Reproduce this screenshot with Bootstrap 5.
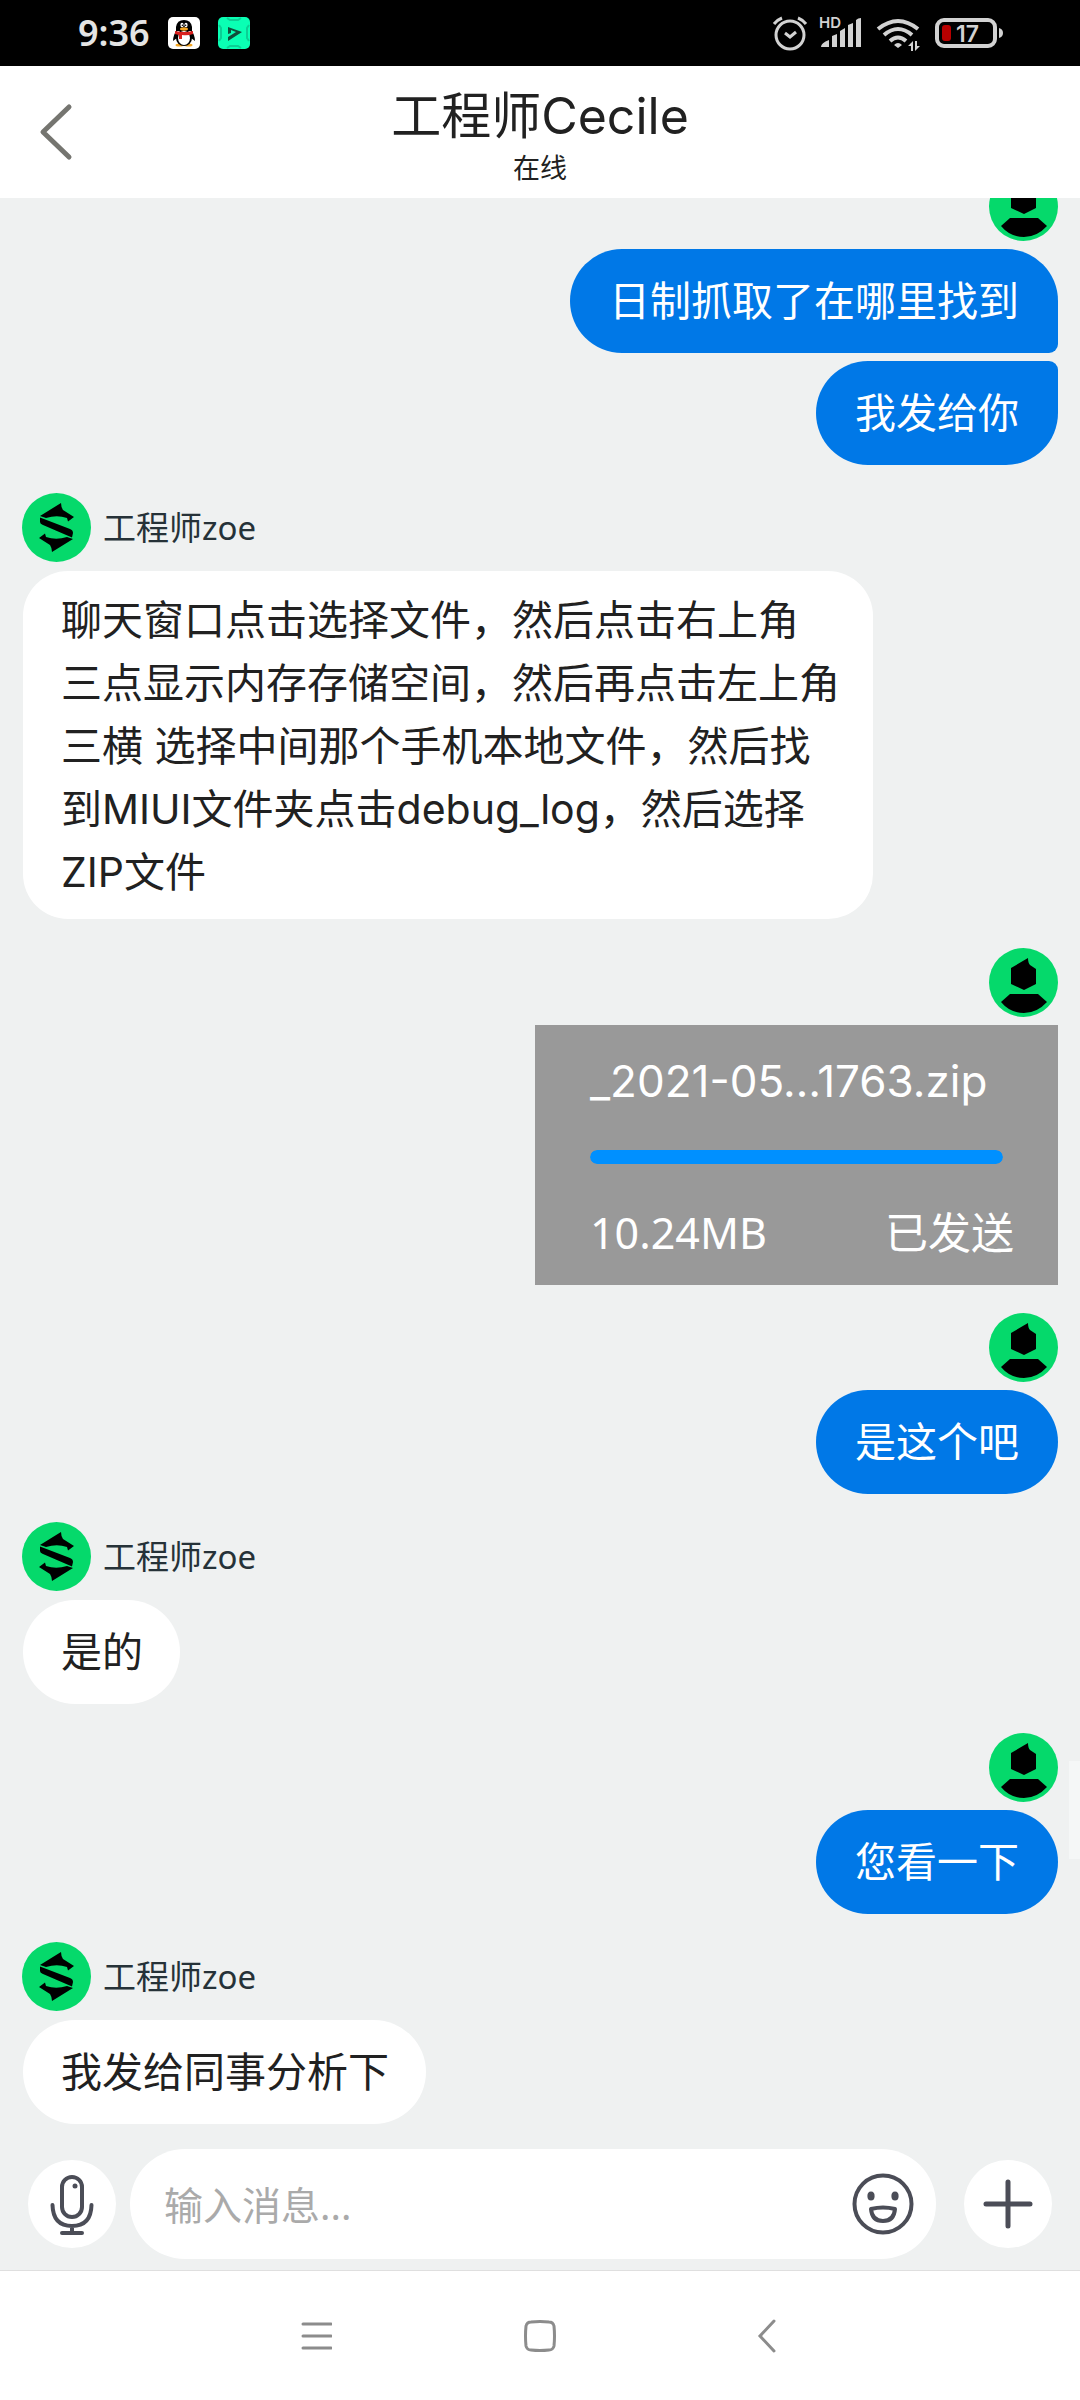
<!DOCTYPE html>
<html lang="zh-CN">
<head>
<meta charset="utf-8">
<meta name="viewport" content="width=device-width, initial-scale=1">
<title>工程师Cecile</title>
<link rel="stylesheet" href="https://cdn.jsdelivr.net/npm/bootstrap@5.3.0/dist/css/bootstrap.min.css">
<style>
  body { font-family: "Noto Sans", "Noto Sans CJK SC", sans-serif; background: #eff1f1; color: #212121; }
  svg { display: block; flex: none; }
  .status-bar { height: 66px; padding: 0 76px 0 78px; background: #000; color: #e4e4e4; }
  .clock { font-size: 36px; line-height: 40px; font-weight: 600; }
  .status-apps { gap: 18px; }
  .chat-header { height: 132px; background: #fff; }
  .side-slot { width: 112px; }
  .back-btn { padding: 0 0 0 39px; }
  .chat-title { font-family: "Inter", "Noto Sans CJK SC", sans-serif; font-size: 50px; line-height: 60px; font-weight: 400; padding-top: 20px; }
  .chat-state { font-size: 27px; line-height: 36px; padding-top: 4px; }
  .thread { padding: 0 22px 25px; overflow: hidden; position: relative; }
  .group-mine { display: flex; flex-direction: column; align-items: flex-end; gap: 8px; margin-bottom: 28px; }
  .group-peer { display: flex; flex-direction: column; align-items: flex-start; gap: 9px; margin-bottom: 29px; }
  .group-cut { margin-top: -26px; }
  .group-last { margin-bottom: 0; }
  .peer-name { font-size: 33px; line-height: 40px; color: #263238; gap: 12px; }
  .bubble { font-family: "Inter", "Noto Sans CJK SC", sans-serif; font-size: 41px; line-height: 63px; border-radius: 52px; padding: 21px 39px 20px; }
  .bubble-mine { background: #0078e7; color: #fff; }
  .bubble-peer { background: #fff; margin-left: 1px; padding-left: 38px; padding-right: 37px; }
  .bubble-long { max-width: 851px; border-radius: 45px; padding: 18px 33px 15px 38px; }
  .join-top { border-bottom-right-radius: 9px; }
  .join-bottom { border-top-right-radius: 9px; }
  .file-card { width: 523px; height: 260px; background: #999; color: #fff; font-size: 43px; line-height: 60px; padding: 26px 44px 22px 55px; }
  .file-name { font-family: "Inter", sans-serif; font-size: 44px; }
  .file-card .progress { height: 14px; border-radius: 7px; margin-right: 11px; background: #999; }
  .file-card .progress-bar { background: #0090ff; border-radius: 7px; }
  .scroll-hint { position: absolute; right: 0; top: 1563px; width: 11px; height: 98px; background: #f5f7f7; }
  .composer { padding: 0 28px 11px; gap: 14px; border-bottom: 1px solid #dfdfdf; }
  .round-btn { width: 88px; height: 88px; border-radius: 50%; background: #fff; }
  .plus-btn { margin-left: 14px; }
  .message-box { height: 110px; border-radius: 55px; background: #fff; padding: 0 22px 0 34px; }
  .message-box input { font-size: 39px; line-height: 56px; color: #212121; padding: 2px 0 0; }
  .message-box input::placeholder { color: #aaa; opacity: 1; }
  .system-nav { height: 129px; background: #fff; gap: 192px; }
</style>
</head>
<body>
<div class="d-flex flex-column min-vh-100">
  <div class="status-bar d-flex justify-content-between align-items-center">
    <div class="status-apps d-flex align-items-center">
      <span class="clock">9:36</span>
      <svg width="32" height="32" viewBox="0 0 32 32" role="img" aria-label="QQ">
        <rect width="32" height="32" rx="5" fill="#fff"/>
        <path d="M9 13Q5 18 5 24L9 21ZM23 13Q27 18 27 24L23 21Z" fill="#000"/>
        <ellipse cx="11.500" cy="28" rx="4" ry="1.600" fill="#f5a623"/><ellipse cx="20.500" cy="28" rx="4" ry="1.600" fill="#f5a623"/>
        <ellipse cx="16" cy="21" rx="8" ry="8" fill="#000"/><ellipse cx="16" cy="21" rx="6" ry="7" fill="#fff"/>
        <path d="M8 14V10Q9 3 16 3Q23 3 24 10V14Z" fill="#000"/>
        <ellipse cx="14" cy="8" rx="1.600" ry="2.200" fill="#fff"/><ellipse cx="18" cy="8" rx="1.600" ry="2.200" fill="#fff"/>
        <circle cx="14.400" cy="8.300" r=".8"/><circle cx="17.600" cy="8.300" r=".8"/>
        <ellipse cx="16" cy="12" rx="4" ry="1.700" fill="#f5a623"/>
        <path d="M7 14Q16 16 25 14V17Q20 19 14 18V22H11V18L7 17Z" fill="#d9201e"/>
      </svg>
      <svg width="32" height="32" viewBox="0 0 32 32" role="img" aria-label="App">
        <rect width="32" height="32" rx="5" fill="#0affb4"/>
        <path d="M9 1L12 3H20L23 1M9 31L12 29H20L23 31M1 8L3 11V21L1 24M31 8L29 11V21L31 24" fill="none" stroke="#0bcf95" stroke-width="2"/>
        <path d="M10 10L24 15L10 24V20L18 15L13 13V16L10 17Z" fill="#114d3b"/>
      </svg>
    </div>
    <svg width="234" height="40" viewBox="770 13 234 40" fill="none" stroke="#d2d2d2" role="img" aria-label="闹钟 信号 无线网络 电量">
      <circle cx="790" cy="35" r="14" stroke-width="3"/>
      <path d="M785 33L790 37L796 32M774 24Q777 20 782 18M798 18Q803 20 806 24" stroke-width="3"/>
      <g fill="#d2d2d2" stroke="none">
        <path d="M821 47Q821 43 829 40V47ZM832 36L837 34V47H832ZM840 31L845 28V47H840ZM848 25L853 23V47H848ZM856 20Q858 18 861 18V47H856Z"/>
        <text x="819" y="28" font-size="15" font-weight="600" font-family="Inter, sans-serif">HD</text>
        <text x="956" y="42" font-size="23" font-weight="600" font-family="Inter, sans-serif">17</text>
        <path d="M894 45Q898 41 902 45L898 48ZM908 46L913 41V51H911V46ZM915 41H917V46H920L915 51ZM999 28Q1003 29 1003 33Q1003 37 999 38Z"/>
      </g>
      <path d="M878 29Q898 13 918 29M884 35Q898 23 912 35M890 41Q898 34 906 41" stroke-width="4"/>
      <rect x="937" y="20" width="58" height="26" rx="7" stroke-width="4"/>
      <rect x="942" y="25" width="9" height="16" rx="3" fill="#b80000" stroke="none"/>
    </svg>
  </div>

  <header class="chat-header d-flex">
    <div class="side-slot d-flex align-items-center">
      <button type="button" class="back-btn btn border-0" aria-label="返回">
        <svg width="34" height="60" viewBox="0 0 34 60" fill="none" stroke="#757570" stroke-width="5" stroke-linecap="round" stroke-linejoin="round"><path d="M30 5L4 30L30 55"/></svg>
      </button>
    </div>
    <div class="flex-grow-1 text-center">
      <h1 class="chat-title m-0">工程师Cecile</h1>
      <div class="chat-state">在线</div>
    </div>
    <div class="side-slot"></div>
  </header>

  <svg width="0" height="0" class="position-absolute" aria-hidden="true">
    <symbol id="avatar-me" viewBox="0 0 69 69">
      <circle cx="34.500" cy="34.500" r="34.500" fill="#05d96b"/>
      <path d="M39 10L22 20V36L35 42L47 36V21L41 17Q39 15 39 10ZM21 46H49L58 54Q48 65 35 65Q21 65 12 54Z"/>
    </symbol>
    <symbol id="avatar-peer" viewBox="0 0 69 69">
      <circle cx="34.500" cy="34.500" r="34.500" fill="#05d96b"/>
      <g id="s-hook"><path d="M18 23L39 10Q39 14 41 17L52 24L46 28.500L45 25Q35 21.500 24 25Z"/></g>
      <use href="#s-hook" transform="rotate(180 34.500 34.500)"/>
      <path d="M18 24.500V29Q18 31 21 32L50 44.500L51 40Q51 37 48 36Z"/>
    </symbol>
  </svg>

  <main class="thread flex-grow-1">
    <section class="group-mine group-cut">
      <svg width="69" height="69" role="img" aria-label="我"><use href="#avatar-me"/></svg>
      <div class="bubble bubble-mine join-top">日制抓取了在哪里找到</div>
      <div class="bubble bubble-mine join-bottom">我发给你</div>
    </section>

    <section class="group-peer">
      <div class="peer-name d-flex align-items-center">
        <svg width="69" height="69" aria-hidden="true"><use href="#avatar-peer"/></svg><span>工程师zoe</span>
      </div>
      <div class="bubble bubble-peer bubble-long">聊天窗口点击选择文件，然后点击右上角<br>三点显示内存存储空间，然后再点击左上角<br>三横 选择中间那个手机本地文件，然后找<br>到MIUI文件夹点击debug_log，然后选择<br>ZIP文件</div>
    </section>

    <section class="group-mine">
      <svg width="69" height="69" role="img" aria-label="我"><use href="#avatar-me"/></svg>
      <div class="file-card d-flex flex-column justify-content-between">
        <div class="file-name text-nowrap">_2021-05…1763.zip</div>
        <div class="progress" role="progressbar" aria-label="上传进度" aria-valuenow="100" aria-valuemin="0" aria-valuemax="100"><div class="progress-bar w-100"></div></div>
        <div class="d-flex justify-content-between"><span>10.24MB</span><span>已发送</span></div>
      </div>
    </section>

    <section class="group-mine">
      <svg width="69" height="69" role="img" aria-label="我"><use href="#avatar-me"/></svg>
      <div class="bubble bubble-mine">是这个吧</div>
    </section>

    <section class="group-peer">
      <div class="peer-name d-flex align-items-center">
        <svg width="69" height="69" aria-hidden="true"><use href="#avatar-peer"/></svg><span>工程师zoe</span>
      </div>
      <div class="bubble bubble-peer">是的</div>
    </section>

    <section class="group-mine">
      <svg width="69" height="69" role="img" aria-label="我"><use href="#avatar-me"/></svg>
      <div class="bubble bubble-mine">您看一下</div>
    </section>

    <section class="group-peer group-last">
      <div class="peer-name d-flex align-items-center">
        <svg width="69" height="69" aria-hidden="true"><use href="#avatar-peer"/></svg><span>工程师zoe</span>
      </div>
      <div class="bubble bubble-peer">我发给同事分析下</div>
    </section>
    <div class="scroll-hint"></div>
  </main>

  <form class="composer d-flex align-items-center">
    <button type="button" class="round-btn btn p-0 border-0 d-flex align-items-center justify-content-center flex-shrink-0" aria-label="语音">
      <svg width="88" height="88" viewBox="0 0 88 88" fill="none" stroke="#4b4d57" stroke-width="4" stroke-linecap="round"><rect x="34" y="17" width="20" height="40" rx="10"/><path d="M24.500 45Q25 66 44 66Q63 66 63.500 45M44 66V73M34 73H54"/><circle cx="47" cy="26" r="2.500" fill="#4b4d57" stroke="none"/></svg>
    </button>
    <div class="message-box d-flex align-items-center flex-grow-1">
      <input type="text" class="form-control border-0 bg-transparent shadow-none" placeholder="输入消息..." aria-label="输入消息">
      <button type="button" class="btn p-0 border-0" aria-label="表情">
        <svg width="62" height="62" viewBox="0 0 62 62" fill="none" stroke="#4b4d57" stroke-width="4"><circle cx="31" cy="31" r="28.500"/><path d="M19 36Q31 33 43 36Q42 48 31 48Q20 48 19 36Z" stroke-linejoin="round"/><g fill="#4b4d57" stroke="none"><ellipse cx="19" cy="23" rx="3.600" ry="4.500"/><ellipse cx="43" cy="23" rx="3.600" ry="4.500"/></g></svg>
      </button>
    </div>
    <button type="button" class="round-btn plus-btn btn p-0 border-0 d-flex align-items-center justify-content-center flex-shrink-0" aria-label="更多">
      <svg width="88" height="88" viewBox="0 0 88 88" stroke="#4b4d57" stroke-width="5" stroke-linecap="round"><path d="M22 44H66M44 22V66"/></svg>
    </button>
  </form>

  <nav class="system-nav d-flex justify-content-center align-items-center" aria-label="系统导航">
    <button type="button" class="btn p-0 border-0" aria-label="任务"><svg width="32" height="34" viewBox="0 0 32 34" stroke="#8c8c8c" stroke-width="3" stroke-linecap="round"><path d="M3 5H31M3 17H31M3 29H31"/></svg></button>
    <button type="button" class="btn p-0 border-0" aria-label="主页"><svg width="32" height="34" viewBox="0 0 32 34" fill="none" stroke="#8c8c8c" stroke-width="3"><path d="M7 3Q16 2 25 3Q29 3 30 7Q31 17 30 27Q29 31 25 31Q16 32 7 31Q3 31 2 27Q1 17 2 7Q3 3 7 3Z"/></svg></button>
    <button type="button" class="btn p-0 border-0" aria-label="返回"><svg width="32" height="34" viewBox="0 0 32 34" fill="none" stroke="#8c8c8c" stroke-width="3" stroke-linecap="round"><path d="M26 2L12 17L26 32"/></svg></button>
  </nav>
</div>
<script src="https://cdn.jsdelivr.net/npm/bootstrap@5.3.0/dist/js/bootstrap.bundle.min.js"></script>
</body>
</html>
